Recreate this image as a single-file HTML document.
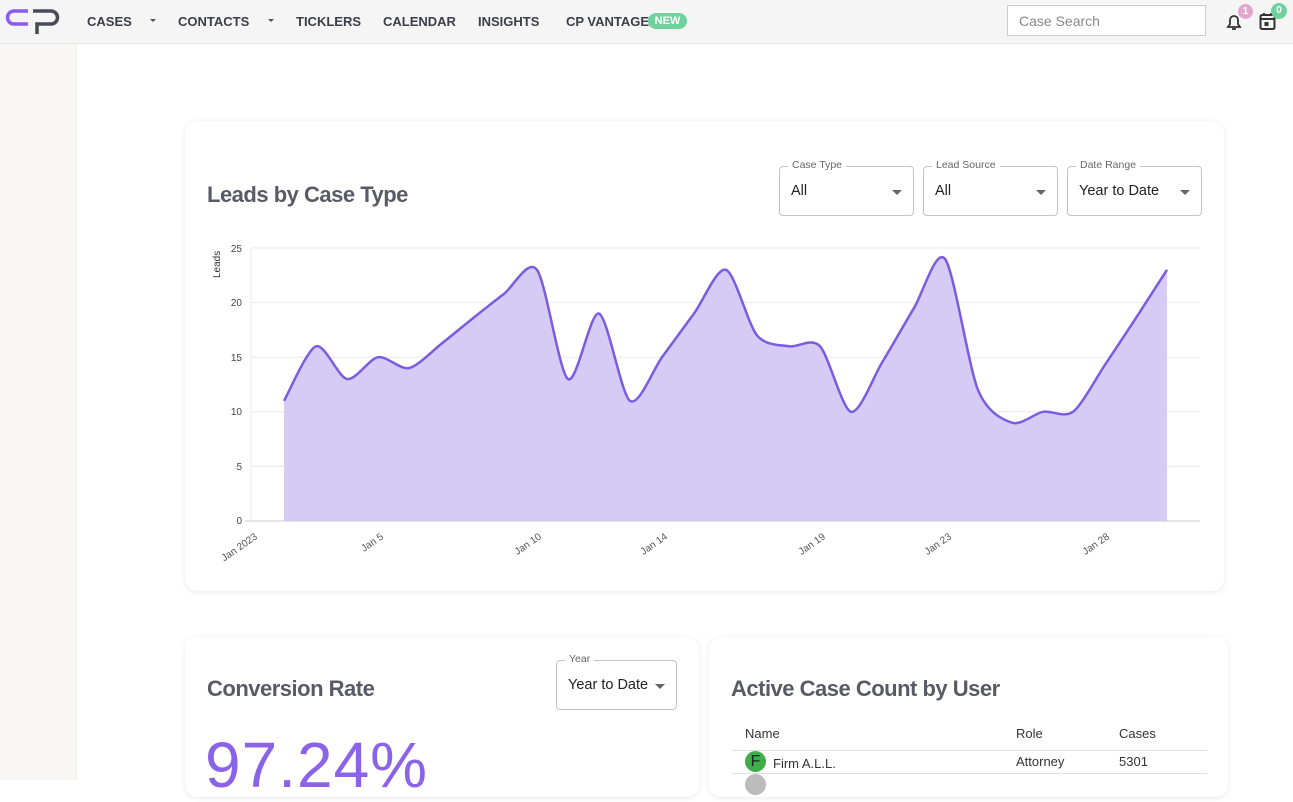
<!DOCTYPE html>
<html><head><meta charset="utf-8">
<style>
*{box-sizing:border-box;margin:0;padding:0}
body{width:1293px;height:780px;overflow:hidden;background:#fff;font-family:"Liberation Sans",Arial,sans-serif;position:relative}
.top{position:absolute;left:0;top:0;width:1293px;height:44px;background:#f5f5f5;border-bottom:1px solid #e6e6e6}
.nav{position:absolute;top:14px;font-size:13px;color:#3d3d4a;font-weight:bold;letter-spacing:0}
.caret{position:absolute;top:19px;width:0;height:0;border-left:3px solid transparent;border-right:3px solid transparent;border-top:3px solid #555}
.side{position:absolute;left:0;top:44px;width:77px;height:736px;background:#faf6f5;border-right:1px solid #eee}
.card{position:absolute;background:#fff;border-radius:12px;box-shadow:0 1px 6px rgba(0,0,0,.09)}
h2{position:absolute;font-size:22px;color:#5a5a66;font-weight:bold;letter-spacing:-.5px}
.sel{position:absolute;border:1px solid #c4c4c4;border-radius:4px;height:50px}
.sel .lb{position:absolute;top:-8px;left:8px;background:#fff;padding:0 4px;font-size:10.5px;color:#666}
.sel .v{position:absolute;left:11px;top:16px;font-size:14.5px;color:#222}
.sel .a{position:absolute;right:11px;top:23px;border-left:5px solid transparent;border-right:5px solid transparent;border-top:5px solid #666}
</style></head><body>
<div class="top">
<svg style="position:absolute;left:0;top:0" width="64" height="40" viewBox="0 0 64 40"><path d="M28 11H14a6.5 6.5 0 0 0 0 13H28" fill="none" stroke="#8a5cf0" stroke-width="3.5"/><path d="M37 34V24H51a6.5 6.5 0 0 0 0-13H33" fill="none" stroke="#4a4a56" stroke-width="3.5"/></svg>
<div class="nav" style="left:87px">CASES</div><div class="caret" style="left:150px"></div>
<div class="nav" style="left:178px">CONTACTS</div><div class="caret" style="left:268px"></div>
<div class="nav" style="left:296px">TICKLERS</div>
<div class="nav" style="left:383px">CALENDAR</div>
<div class="nav" style="left:478px">INSIGHTS</div>
<div class="nav" style="left:566px">CP VANTAGE</div>
<div style="position:absolute;left:648px;top:13px;width:39px;height:16px;border-radius:8px;background:#6fd29d;color:#fff;font-size:11px;font-weight:bold;text-align:center;line-height:16px">NEW</div>
<div style="position:absolute;left:1007px;top:5px;width:199px;height:31px;border:1px solid #ccc;background:#fff;font-size:14px;color:#888;padding:7px 11px">Case Search</div>
<svg style="position:absolute;left:1224px;top:12px" width="20" height="20" viewBox="0 0 20 20"><path d="M4 15h12l-2-3V8a4 4 0 0 0-8 0v4z" fill="none" stroke="#333" stroke-width="1.8"/><path d="M8 17h4" stroke="#333" stroke-width="1.8"/></svg>
<div style="position:absolute;left:1238px;top:4px;width:15px;height:15px;border-radius:50%;background:#e2a6cf;color:#fff;font-size:10px;font-weight:bold;text-align:center;line-height:15px">1</div>
<svg style="position:absolute;left:1258px;top:11px" width="20" height="20" viewBox="0 0 20 20"><rect x="2.5" y="4" width="14" height="14" rx="1.5" fill="none" stroke="#333" stroke-width="2"/><path d="M2.5 8h14M6 2v3M13 2v3" stroke="#333" stroke-width="2"/><rect x="6.5" y="11" width="4" height="4" fill="#333"/></svg>
<div style="position:absolute;left:1271px;top:3px;width:16px;height:16px;border-radius:50%;background:#6fd29d;color:#fff;font-size:10px;font-weight:bold;text-align:center;line-height:16px">0</div>
</div>
<div class="side"></div>

<div class="card" style="left:185px;top:121px;width:1039px;height:470px"></div>
<h2 style="left:207px;top:182px">Leads by Case Type</h2>
<div class="sel" style="left:779px;top:166px;width:135px"><span class="lb">Case Type</span><span class="v">All</span><span class="a"></span></div>
<div class="sel" style="left:923px;top:166px;width:135px"><span class="lb">Lead Source</span><span class="v">All</span><span class="a"></span></div>
<div class="sel" style="left:1067px;top:166px;width:135px"><span class="lb">Date Range</span><span class="v">Year to Date</span><span class="a"></span></div>

<svg id="ch" style="position:absolute;left:0;top:0" width="1293" height="600">
<g stroke="#e8e8e8" stroke-width="1">
<line x1="251" x2="1200" y1="248" y2="248"/><line x1="251" x2="1200" y1="302.6" y2="302.6"/><line x1="251" x2="1200" y1="357.2" y2="357.2"/><line x1="251" x2="1200" y1="411.8" y2="411.8"/><line x1="251" x2="1200" y1="466.4" y2="466.4"/>
<line x1="251" x2="251" y1="248" y2="521"/>
</g>
<line x1="245" x2="1200" y1="521" y2="521" stroke="#ccc"/>
<g font-size="10" fill="#444" text-anchor="end">
<text x="242" y="252">25</text><text x="242" y="306">20</text><text x="242" y="361">15</text><text x="242" y="415">10</text><text x="242" y="470">5</text><text x="242" y="524">0</text>
</g>
<text transform="translate(220,278) rotate(-90)" font-size="10" fill="#333">Leads</text>
<g font-size="10" fill="#555" text-anchor="end">
<text transform="translate(258,538) rotate(-35)">Jan 2023</text>
<text transform="translate(384,538) rotate(-35)">Jan 5</text>
<text transform="translate(542,538) rotate(-35)">Jan 10</text>
<text transform="translate(668,538) rotate(-35)">Jan 14</text>
<text transform="translate(826,538) rotate(-35)">Jan 19</text>
<text transform="translate(952,538) rotate(-35)">Jan 23</text>
<text transform="translate(1110,538) rotate(-35)">Jan 28</text>
</g>
<path id="area" fill="#d5cbf5"/>
<path id="line" fill="none" stroke="#7b5ce0" stroke-width="2.5"/>
</svg>
<script>
var d=[[284,11],[316,16],[347,13],[378,15],[409,14],[441,16.2],[472,18.5],[504,20.8],[537,23],[568,13],[599,19],[630,11],[662,15],[694,19],[726,23],[757,17],[789,16],[820,16],[851,10],[882,14.5],[914,19.5],[945,24],[978,12],[1012,9],[1043,10],[1073,10],[1105,14.3],[1136,18.6],[1167,23]];
var p=d.map(function(a){return [a[0],521-a[1]*10.92]});
var s="M"+p[0][0]+" "+p[0][1];
for(var i=0;i<p.length-1;i++){var p0=p[i-1]||p[i],p1=p[i],p2=p[i+1],p3=p[i+2]||p2,t=0.14;
s+=" C"+(p1[0]+(p2[0]-p0[0])*t)+" "+(p1[1]+(p2[1]-p0[1])*t)+" "+(p2[0]-(p3[0]-p1[0])*t)+" "+(p2[1]-(p3[1]-p1[1])*t)+" "+p2[0]+" "+p2[1];}
document.getElementById('line').setAttribute('d',s);
document.getElementById('area').setAttribute('d',s+" L1167 521 L284 521Z");
</script>

<div class="card" style="left:185px;top:637px;width:514px;height:160px"></div>
<h2 style="left:207px;top:676px">Conversion Rate</h2>
<div class="sel" style="left:556px;top:660px;width:121px"><span class="lb">Year</span><span class="v">Year to Date</span><span class="a"></span></div>
<div style="position:absolute;left:205px;top:728px;font-size:64px;color:#8a63e8;letter-spacing:1px">97.24%</div>

<div class="card" style="left:709px;top:637px;width:519px;height:160px"></div>
<h2 style="left:731px;top:676px">Active Case Count by User</h2>
<div style="position:absolute;left:745px;top:726px;font-size:13px;color:#333">Name</div>
<div style="position:absolute;left:1016px;top:726px;font-size:13px;color:#333">Role</div>
<div style="position:absolute;left:1119px;top:726px;font-size:13px;color:#333">Cases</div>
<div style="position:absolute;left:731px;top:750px;width:476px;border-top:1px solid #e0e0e0"></div>
<div style="position:absolute;left:745px;top:751px;width:21px;height:21px;border-radius:50%;background:#3fae49;color:#222;font-size:16px;text-align:center;line-height:21px">F</div>
<div style="position:absolute;left:773px;top:756px;font-size:13px;color:#333">Firm A.L.L.</div>
<div style="position:absolute;left:1016px;top:754px;font-size:13px;color:#333">Attorney</div>
<div style="position:absolute;left:1119px;top:754px;font-size:13px;color:#333">5301</div>
<div style="position:absolute;left:731px;top:773px;width:476px;border-top:1px solid #e0e0e0"></div>
<div style="position:absolute;left:745px;top:774px;width:21px;height:21px;border-radius:50%;background:#bbb"></div>
</body></html>
